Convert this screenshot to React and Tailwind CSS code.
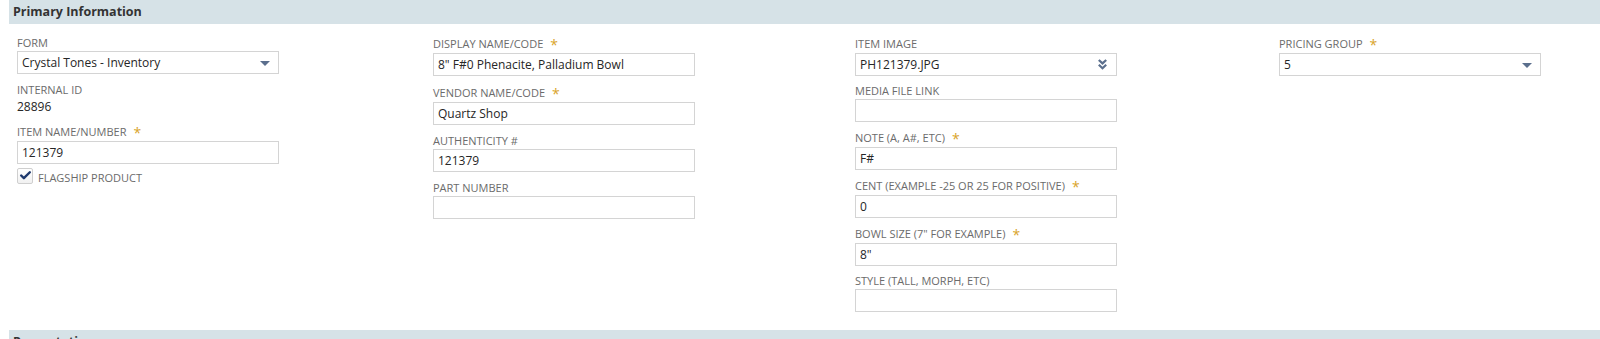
import { Check } from 'lucide-react';

// ---------- small parts ----------
const Star = () => <span className="ml-[7px] text-[14px] leading-none text-[#d9a42a] relative top-[1px]">*</span>;

const Label = ({ children, req, tall }) => (
    <div
        className={`flex items-center text-[11px] uppercase text-[#6b6b6b] ${req || tall ? 'h-[18px]' : 'h-[16px]'}`}
    >
        {children}
        {req && <Star />}
    </div>
);

const Box = ({ value, arrow }) => (
    <div className="relative h-[23px] w-[262px] border border-[#d4d4d4] bg-white flex items-center pl-[4px] text-[12px] text-[#262626]">
        <span>{value}</span>
        {arrow === 'down' && (
            <svg className="absolute right-[8px] top-[9px]" width="10" height="5" viewBox="0 0 10 5">
                <path d="M0 0H10L5 5Z" fill="#5b6f8d" />
            </svg>
        )}
        {arrow === 'double' && (
            <svg className="absolute right-[9px] top-[5px]" width="9" height="11" viewBox="0 0 9 11">
                <path d="M0.8 1 L4.5 4.4 L8.2 1" stroke="#5b6f8d" strokeWidth="2.2" fill="none" />
                <path d="M0.8 5.8 L4.5 9.2 L8.2 5.8" stroke="#5b6f8d" strokeWidth="2.2" fill="none" />
            </svg>
        )}
    </div>
);

const Field = ({ label, req, tall, value, arrow, last, gap = 'mb-[8px]' }) => (
    <div className={last ? '' : gap}>
        <Label req={req} tall={tall}>{label}</Label>
        <Box value={value} arrow={arrow} />
    </div>
);

const SectionBar = ({ title }) => (
    <div className="ml-[9px] h-[24px] bg-[#d6e2e7] flex items-center pl-[4px] text-[12.5px] font-bold text-[#333333]">
        {title}
    </div>
);

export default function App() {
    return (
        <div className="w-[1600px] h-[339px] overflow-hidden bg-white" style={{ fontFamily: '"Open Sans", "Liberation Sans", sans-serif' }}>
            <SectionBar title="Primary Information" />

            <div className="grid grid-cols-[416px_422px_424px_1fr] pl-[17px] pt-[11px] pb-[18px]">
                {/* column 1 */}
                <div>
                    <Field label="Form" value="Crystal Tones - Inventory" arrow="down" />
                    <Label>Internal ID</Label>
                    <div className="h-[18px] mb-[7px] flex items-center text-[12px] text-[#262626]">28896</div>
                    <Field label="Item Name/Number" req value="121379" last />
                    <div className="flex items-start mt-[4px]">
                        <div className="w-[16px] h-[16px] border border-[#cfcfcf] rounded-[2px] bg-gradient-to-b from-white to-[#f1f1f1] flex items-center justify-center">
                            <Check className="w-[13px] h-[13px] text-[#1f3a6e] -mt-[2px]" strokeWidth={4.5} />
                        </div>
                        <span className="ml-[5px] mt-[2px] text-[11px] uppercase text-[#6b6b6b]">Flagship Product</span>
                    </div>
                </div>

                {/* column 2 */}
                <div>
                    <Field label="Display Name/Code" req value={'8" F#0 Phenacite, Palladium Bowl'} />
                    <Field label="Vendor Name/Code" req value="Quartz Shop" />
                    <Field label="Authenticity #" value="121379" />
                    <Field label="Part Number" value="" last />
                </div>

                {/* column 3 */}
                <div>
                    <Field label="Item Image" tall value="PH121379.JPG" arrow="double" gap="mb-[7px]" />
                    <Field label="Media File Link" value="" gap="mb-[7px]" />
                    <Field label="Note (A, A#, ETC)" req value="F#" gap="mb-[7px]" />
                    <Field label="Cent (Example -25 or 25 for positive)" req value="0" gap="mb-[7px]" />
                    <Field label={'Bowl Size (7" for example)'} req value={'8"'} gap="mb-[7px]" />
                    <Field label="Style (Tall, Morph, ETC)" value="" last />
                </div>

                {/* column 4 */}
                <div>
                    <Field label="Pricing Group" req value="5" arrow="down" last />
                </div>
            </div>

            <SectionBar title="Presentation" />
        </div>
    );
}
